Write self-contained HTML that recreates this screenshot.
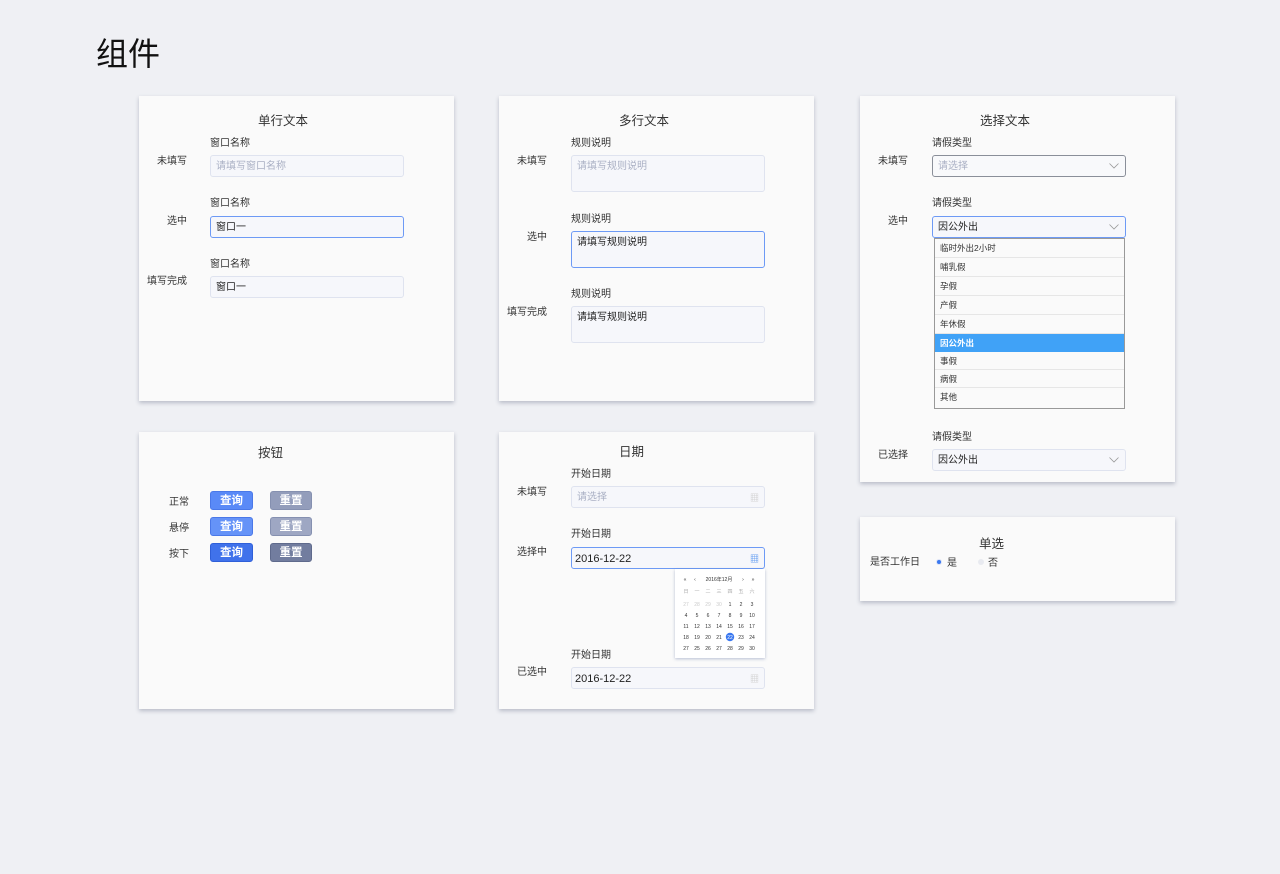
<!DOCTYPE html>
<html><head><meta charset="utf-8"><style>
*{margin:0;padding:0;box-sizing:border-box}
body{width:1280px;height:874px;background:#eff0f4;position:relative;overflow:hidden;font-family:"Liberation Sans","Noto Sans CJK SC",sans-serif;color:#333}
.a{position:absolute}
.card{position:absolute;background:#fafafa;box-shadow:0 2px 4px rgba(60,70,100,.3)}
.t{position:absolute;font-size:12.5px;color:#333;white-space:nowrap}
.s{position:absolute;font-size:10px;color:#333;white-space:nowrap;line-height:12px;margin-top:1px}
.in{position:absolute;width:194px;height:22px;border:1px solid #dfe3ef;background:#f6f7fb;border-radius:3px;font-size:10px;line-height:22px;padding-left:5px;color:#222}
.ph{color:#aab0c4}
.blue{border-color:#6d9af5}
.btn{position:absolute;width:43px;height:19px;border-radius:3px;color:#fff;font-size:11.5px;font-weight:bold;text-align:center;line-height:18px}
.r{text-align:right}
.chev{position:absolute;right:6px;top:7px}
</style></head><body>
<div class="a" style="left:96px;top:29px;font-size:32px;color:#111">组件</div>

<!-- card1 -->
<div class="card" style="left:139px;top:96px;width:315px;height:305px"></div>
<div class="t" style="left:258px;top:110px">单行文本</div>
<div class="s" style="left:210px;top:137px">窗口名称</div>
<div class="s r" style="left:140px;width:47px;top:155px">未填写</div>
<div class="in" style="left:210px;top:155px"><span class="ph">请填写窗口名称</span></div>
<div class="s" style="left:210px;top:197px">窗口名称</div>
<div class="s r" style="left:140px;width:47px;top:215px">选中</div>
<div class="in blue" style="left:210px;top:216px">窗口一</div>
<div class="s" style="left:210px;top:258px">窗口名称</div>
<div class="s r" style="left:140px;width:47px;top:275px">填写完成</div>
<div class="in" style="left:210px;top:276px">窗口一</div>

<!-- card2 -->
<div class="card" style="left:499px;top:96px;width:315px;height:305px"></div>
<div class="t" style="left:619px;top:110px">多行文本</div>
<div class="s" style="left:571px;top:137px">规则说明</div>
<div class="s r" style="left:500px;width:47px;top:155px">未填写</div>
<div class="in" style="left:571px;top:155px;height:37px"><span class="ph">请填写规则说明</span></div>
<div class="s" style="left:571px;top:213px">规则说明</div>
<div class="s r" style="left:500px;width:47px;top:231px">选中</div>
<div class="in blue" style="left:571px;top:231px;height:37px">请填写规则说明</div>
<div class="s" style="left:571px;top:288px">规则说明</div>
<div class="s r" style="left:500px;width:47px;top:306px">填写完成</div>
<div class="in" style="left:571px;top:306px;height:37px">请填写规则说明</div>

<!-- card3 -->
<div class="card" style="left:860px;top:96px;width:315px;height:386px"></div>
<div class="t" style="left:980px;top:110px">选择文本</div>
<div class="s" style="left:932px;top:137px">请假类型</div>
<div class="s r" style="left:861px;width:47px;top:155px">未填写</div>
<div class="in" style="left:932px;top:155px;border-color:#8a8f99;background:#f8f9fb"><span class="ph">请选择</span><svg class="chev" width="10" height="6"><path d="M0.5 0.5L5 5L9.5 0.5" fill="none" stroke="#999" stroke-width="0.8"/></svg></div>
<div class="s" style="left:932px;top:197px">请假类型</div>
<div class="s r" style="left:861px;width:47px;top:215px">选中</div>
<div class="in blue" style="left:932px;top:216px">因公外出<svg class="chev" width="10" height="6"><path d="M0.5 0.5L5 5L9.5 0.5" fill="none" stroke="#999" stroke-width="0.8"/></svg></div>
<div class="a" style="left:934px;top:238px;width:191px;height:171px;border:1px solid #999;background:#fafafa;font-size:8.5px;color:#333">
<div style="height:19px;line-height:18px;padding-left:5px;border-bottom:1px solid #e6e6e6">临时外出2小时</div>
<div style="height:19px;line-height:18px;padding-left:5px;border-bottom:1px solid #e6e6e6">哺乳假</div>
<div style="height:19px;line-height:18px;padding-left:5px;border-bottom:1px solid #e6e6e6">孕假</div>
<div style="height:19px;line-height:18px;padding-left:5px;border-bottom:1px solid #e6e6e6">产假</div>
<div style="height:19px;line-height:18px;padding-left:5px;border-bottom:1px solid #e6e6e6">年休假</div>
<div style="height:18px;line-height:18px;padding-left:5px;background:#40a2f7;color:#fff;font-weight:bold">因公外出</div>
<div style="height:18px;line-height:18px;padding-left:5px;border-bottom:1px solid #e6e6e6">事假</div>
<div style="height:18px;line-height:18px;padding-left:5px;border-bottom:1px solid #e6e6e6">病假</div>
<div style="height:18px;line-height:18px;padding-left:5px">其他</div>
</div>
<div class="s" style="left:932px;top:431px">请假类型</div>
<div class="s r" style="left:861px;width:47px;top:449px">已选择</div>
<div class="in" style="left:932px;top:449px">因公外出<svg class="chev" width="10" height="6"><path d="M0.5 0.5L5 5L9.5 0.5" fill="none" stroke="#999" stroke-width="0.8"/></svg></div>

<!-- card4 -->
<div class="card" style="left:139px;top:432px;width:315px;height:277px"></div>
<div class="t" style="left:258px;top:442px">按钮</div>
<div class="s" style="left:169px;top:496px">正常</div>
<div class="s" style="left:169px;top:522px">悬停</div>
<div class="s" style="left:169px;top:548px">按下</div>
<div class="btn" style="left:210px;top:491px;background:#5a8af7;border:1px solid #4a78e8">查询</div>
<div class="btn" style="left:270px;top:491px;width:42px;background:#939dbb;border:1px solid #8590b0">重置</div>
<div class="btn" style="left:210px;top:517px;background:#6593f8;border:1px solid #4a78e8">查询</div>
<div class="btn" style="left:270px;top:517px;width:42px;background:#9ea7c3;border:1px solid #8590b0">重置</div>
<div class="btn" style="left:210px;top:543px;background:#4072eb;border:1px solid #2f5fd8">查询</div>
<div class="btn" style="left:270px;top:543px;width:42px;background:#727d9f;border:1px solid #5f6a8c">重置</div>

<!-- card5 -->
<div class="card" style="left:499px;top:432px;width:315px;height:277px"></div>
<div class="t" style="left:619px;top:441px">日期</div>
<div class="s" style="left:571px;top:468px">开始日期</div>
<div class="s r" style="left:500px;width:47px;top:486px">未填写</div>
<div class="in" style="left:571px;top:486px"><span class="ph">请选择</span><span class="a" style="right:5px;top:0;color:#ccc;font-size:9px">▦</span></div>
<div class="s" style="left:571px;top:528px">开始日期</div>
<div class="s r" style="left:500px;width:47px;top:546px">选择中</div>
<div class="in blue" style="left:571px;top:547px;font-size:11px;padding-left:3px">2016-12-22<span class="a" style="right:5px;top:0;color:#4a8ef0;font-size:9px">▦</span></div>
<div class="a" style="left:675px;top:569px;width:90px;height:89px;background:#fff;box-shadow:0 1px 3px rgba(60,80,140,.35)">
<svg width="90" height="89" font-family="Liberation Sans,Noto Sans CJK SC,sans-serif" font-size="5" fill="#333" text-anchor="middle">
<text x="10" y="12">«</text><text x="20" y="12">‹</text><text x="44" y="12">2016年12月</text><text x="68" y="12">›</text><text x="78" y="12">»</text>
<g fill="#aaa"><text x="11" y="24">日</text><text x="22" y="24">一</text><text x="33" y="24">二</text><text x="44" y="24">三</text><text x="55" y="24">四</text><text x="66" y="24">五</text><text x="77" y="24">六</text></g>
<g fill="#ccc"><text x="11" y="37">27</text><text x="22" y="37">28</text><text x="33" y="37">29</text><text x="44" y="37">30</text></g>
<text x="55" y="37">1</text><text x="66" y="37">2</text><text x="77" y="37">3</text>
<text x="11" y="48">4</text><text x="22" y="48">5</text><text x="33" y="48">6</text><text x="44" y="48">7</text><text x="55" y="48">8</text><text x="66" y="48">9</text><text x="77" y="48">10</text>
<text x="11" y="59">11</text><text x="22" y="59">12</text><text x="33" y="59">13</text><text x="44" y="59">14</text><text x="55" y="59">15</text><text x="66" y="59">16</text><text x="77" y="59">17</text>
<text x="11" y="70">18</text><text x="22" y="70">19</text><text x="33" y="70">20</text><text x="44" y="70">21</text><circle cx="55" cy="68" r="4.2" fill="#3a78f0"/><text x="55" y="70" fill="#fff">22</text><text x="66" y="70">23</text><text x="77" y="70">24</text>
<text x="11" y="81">27</text><text x="22" y="81">25</text><text x="33" y="81">26</text><text x="44" y="81">27</text><text x="55" y="81">28</text><text x="66" y="81">29</text><text x="77" y="81">30</text>
</svg></div>
<div class="s" style="left:571px;top:649px">开始日期</div>
<div class="s r" style="left:500px;width:47px;top:666px">已选中</div>
<div class="in" style="left:571px;top:667px;font-size:11px;padding-left:3px">2016-12-22<span class="a" style="right:5px;top:0;color:#ccc;font-size:9px">▦</span></div>

<!-- card6 -->
<div class="card" style="left:860px;top:517px;width:315px;height:84px"></div>
<div class="t" style="left:979px;top:533px">单选</div>
<div class="s" style="left:870px;top:556px">是否工作日</div>
<div class="a" style="left:937px;top:560px;width:4px;height:4px;border-radius:50%;background:#3a78f0;box-shadow:0 0 0 1px #dde4f5"></div>
<div class="s" style="left:947px;top:557px">是</div>
<div class="a" style="left:978px;top:559px;width:6px;height:6px;border-radius:50%;background:#e8eaf0"></div>
<div class="s" style="left:988px;top:557px">否</div>
</body></html>
